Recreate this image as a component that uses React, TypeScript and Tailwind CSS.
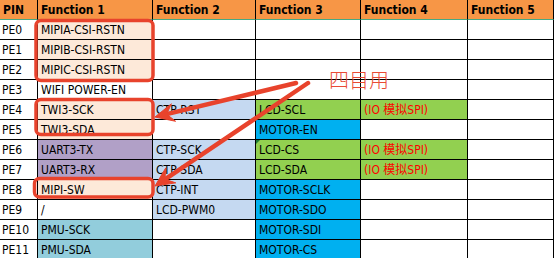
import React from 'react';

// Pin mux sheet for port E with the red hand annotations drawn on top.
type Cell = { text?: string; bg?: string; red?: boolean; mark?: boolean };

const PEACH = 'bg-[#FDE9D9]';
const PURPLE = 'bg-[#B1A0C7]';
const SKY = 'bg-[#C5D9F1]';
const GREEN = 'bg-[#92D050]';
const BLUE = 'bg-[#00B0F0]';
const TEAL = 'bg-[#92CDDC]';

const rows: Cell[][] = [
  [{ text: 'PE0' }, { text: 'MIPIA-CSI-RSTN', bg: PEACH }, {}, {}, {}, {}],
  [{ text: 'PE1' }, { text: 'MIPIB-CSI-RSTN', bg: PEACH }, {}, {}, {}, {}],
  [{ text: 'PE2' }, { text: 'MIPIC-CSI-RSTN', bg: PEACH }, {}, {}, {}, {}],
  [{ text: 'PE3' }, { text: 'WIFI POWER-EN' }, {}, {}, {}, {}],
  [
    { text: 'PE4' },
    { text: 'TWI3-SCK', bg: PEACH },
    { text: 'CTP-RST', bg: SKY },
    { text: 'LCD-SCL', bg: GREEN },
    { text: '(IO 模拟SPI)', bg: GREEN, red: true },
    {},
  ],
  [{ text: 'PE5' }, { text: 'TWI3-SDA', bg: PEACH }, {}, { text: 'MOTOR-EN', bg: BLUE }, {}, {}],
  [
    { text: 'PE6' },
    { text: 'UART3-TX', bg: PURPLE },
    { text: 'CTP-SCK', bg: SKY },
    { text: 'LCD-CS', bg: GREEN, mark: true },
    { text: '(IO 模拟SPI)', bg: GREEN, red: true },
    {},
  ],
  [
    { text: 'PE7' },
    { text: 'UART3-RX', bg: PURPLE },
    { text: 'CTP-SDA', bg: SKY },
    { text: 'LCD-SDA', bg: GREEN },
    { text: '(IO 模拟SPI)', bg: GREEN, red: true },
    {},
  ],
  [{ text: 'PE8' }, { text: 'MIPI-SW', bg: PEACH }, { text: 'CTP-INT', bg: SKY }, { text: 'MOTOR-SCLK', bg: BLUE }, {}, {}],
  [{ text: 'PE9' }, { text: '/' }, { text: 'LCD-PWM0', bg: SKY }, { text: 'MOTOR-SDO', bg: BLUE }, {}, {}],
  [{ text: 'PE10' }, { text: 'PMU-SCK', bg: TEAL }, {}, { text: 'MOTOR-SDI', bg: BLUE }, {}, {}],
  [{ text: 'PE11' }, { text: 'PMU-SDA', bg: TEAL }, {}, { text: 'MOTOR-CS', bg: BLUE }, {}, {}],
];

const heads = ['PIN', 'Function 1', 'Function 2', 'Function 3', 'Function 4', 'Function 5'];

function Arrow({ x1, y1, x2, y2 }: { x1: number; y1: number; x2: number; y2: number }) {
  const len = Math.hypot(x2 - x1, y2 - y1);
  const ux = (x2 - x1) / len;
  const uy = (y2 - y1) / len;
  const nx = -uy;
  const ny = ux;
  const bx = x2 - ux * 19;
  const by = y2 - uy * 19;
  const ix = x2 - ux * 12;
  const iy = y2 - uy * 12;
  const pts = [
    [x2, y2],
    [bx + nx * 9, by + ny * 9],
    [ix, iy],
    [bx - nx * 9, by - ny * 9],
  ]
    .map((p) => p.join(','))
    .join(' ');
  return (
    <g>
      <line x1={x1} y1={y1} x2={ix} y2={iy} stroke="#E8432C" strokeWidth={4.5} strokeLinecap="round" />
      <polygon points={pts} fill="#E8432C" stroke="#E8432C" strokeWidth={1} strokeLinejoin="round" />
    </g>
  );
}

export default function App() {
  return (
    <div className="relative h-[258px] w-[554px] overflow-hidden bg-white font-['DejaVu_Sans','Noto_Sans_CJK_SC',sans-serif] text-[12px] leading-none text-black font-stretch-condensed">
      <div className="grid grid-cols-[38px_115px_103px_105px_107px_86px]">
        {heads.map((h) => (
          <div
            key={h}
            className="flex h-[20px] items-center border-r border-b border-r-black border-b-[#46A985] bg-[#F79646] pl-[3px] pt-px font-bold"
          >
            {h}
          </div>
        ))}
        {rows.map((r, i) =>
          r.map((c, j) => (
            <div
              key={`${i}-${j}`}
              className={`relative flex h-[20px] items-center border-r border-b border-black pt-px ${
                j === 0 ? 'pl-[2px]' : 'pl-[3px]'
              } ${c.bg ?? 'bg-white'} ${c.red ? 'text-[#FF0000]' : ''}`}
            >
              {c.mark ? (
                <span className="absolute top-0 left-0 h-0 w-0 border-t-[4px] border-r-[4px] border-t-[#1E7B34] border-r-transparent" />
              ) : null}
              {c.text}
            </div>
          )),
        )}
      </div>

      <svg className="pointer-events-none absolute inset-0" width={554} height={258}>
        <g fill="none" stroke="#E8432C" strokeWidth={3.5}>
          <rect x={36} y={20.5} width={117} height={60} rx={5} />
          <rect x={36} y={99.5} width={117} height={35} rx={5} />
          <rect x={34.5} y={178.5} width={118.5} height={18.5} rx={5} />
        </g>
        <Arrow x1={296} y1={83} x2={155} y2={117} />
        <Arrow x1={308} y1={83} x2={155} y2={186} />
      </svg>
      <span className="absolute top-[70px] left-[329px] font-['Noto_Sans_CJK_SC',sans-serif] text-[20px] font-light leading-none text-[#E94B35]">
        四目用
      </span>
    </div>
  );
}
